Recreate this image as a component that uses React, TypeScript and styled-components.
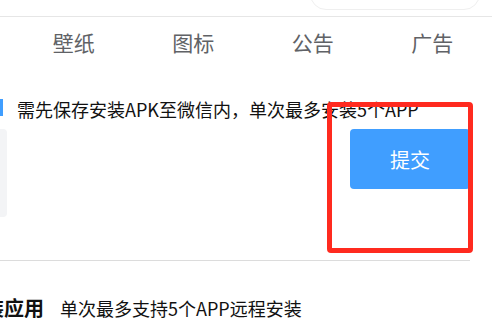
import React from 'react';
import styled, {createGlobalStyle} from 'styled-components';

const tabs = ['壁纸', '图标', '公告', '广告'];

const App = () => {
  return (
    <Page>
      <GlobalStyle />
      <Header>
        <SearchBox />
      </Header>
      <TabBar>
        {tabs.map(t => (
          <Tab key={t}>{t}</Tab>
        ))}
      </TabBar>
      <Section>
        <Notice>
          <NoticeBar />
          <NoticeText>需先保存安装APK至微信内，单次最多安装5个APP</NoticeText>
        </Notice>
        <FormRow>
          <UploadArea />
          <SubmitButton>提交</SubmitButton>
        </FormRow>
        <Highlight />
      </Section>
      <Divider />
      <TitleRow>
        <Title>安装应用</Title>
        <SubTitle>单次最多支持5个APP远程安装</SubTitle>
      </TitleRow>
    </Page>
  );
};

const GlobalStyle = createGlobalStyle`
  html, body {
    margin: 0;
    padding: 0;
    background: #fff;
    overflow: hidden;
  }
  body {
    font-family: "Noto Sans CJK SC", "Noto Sans", sans-serif;
  }
`;

const Page = styled.div`
  width: 492px;
  height: 318px;
  overflow: hidden;
  position: relative;
`;

const Header = styled.div`
  height: 16px;
  border-bottom: 1px solid #e6e6e6;
  display: flex;
  justify-content: flex-end;
  padding-right: 12px;
`;

const SearchBox = styled.div`
  width: 168px;
  height: 30px;
  margin-top: -22px;
  border: 1px solid #efefef;
  border-radius: 16px;
  background: #fff;
`;

const TabBar = styled.div`
  display: flex;
  padding-left: 14px;
  height: 54px;
  align-items: center;
`;

const Tab = styled.div`
  width: 120px;
  text-align: center;
  font-size: 21px;
  color: #606266;
  margin-top: -4px;
`;

const Section = styled.div`
  position: relative;
  width: 470px;
  padding-top: 28px;
  height: 161px;
`;

const Notice = styled.div`
  display: flex;
  align-items: center;
  height: 20px;
`;

const NoticeBar = styled.div`
  width: 3px;
  height: 17px;
  margin-top: -4px;
  background: #409eff;
  margin-right: 14px;
`;

const NoticeText = styled.div`
  font-size: 18px;
  color: #111;
  white-space: nowrap;
  line-height: 20px;
`;

const FormRow = styled.div`
  display: flex;
  justify-content: space-between;
  margin-top: 10px;
`;

const UploadArea = styled.div`
  width: 40px;
  margin-left: -33px;
  height: 88px;
  background: #f3f4f6;
  border-radius: 4px;
`;

const SubmitButton = styled.button`
  width: 120px;
  height: 60px;
  border: none;
  border-radius: 4px;
  background: #409eff;
  color: #fff;
  font-size: 20px;
  font-family: inherit;
  padding: 0;
`;

const Highlight = styled.div`
  position: absolute;
  left: 327px;
  top: 31px;
  width: 136px;
  height: 141px;
  border: 5px solid #ff2a1f;
  border-radius: 4px;
`;

const Divider = styled.div`
  width: 470px;
  height: 1px;
  background: #dcdcdc;
`;

const TitleRow = styled.div`
  display: flex;
  align-items: center;
  margin-top: 32px;
  white-space: nowrap;
`;

const Title = styled.div`
  font-size: 20px;
  font-weight: bold;
  color: #111;
  margin-left: -36px;
  margin-right: 16px;
`;

const SubTitle = styled.div`
  font-size: 18px;
  color: #111;
`;

export default App;
